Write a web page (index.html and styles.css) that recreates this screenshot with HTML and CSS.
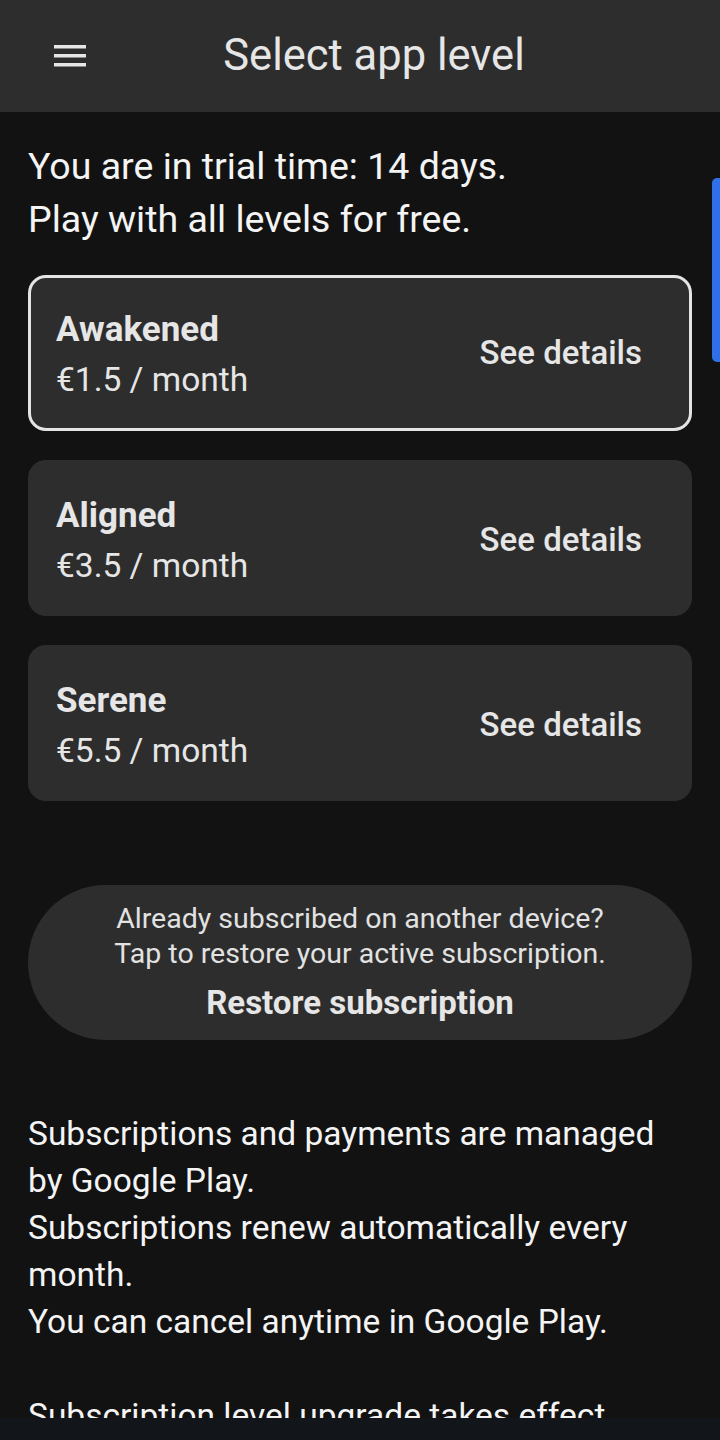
FILE: index.html
```html
<!DOCTYPE html>
<html lang="en">
<head>
<meta charset="utf-8">
<title>Select app level</title>
<link rel="stylesheet" href="styles.css">
</head>
<body>
<div class="screen">
  <header class="topbar">
    <button class="menu" aria-label="Menu">
      <svg width="32" height="22" viewBox="0 0 32 22"><rect x="0" y="0" width="32" height="3.5" fill="#e6e6e6"/><rect x="0" y="9" width="32" height="3.5" fill="#e6e6e6"/><rect x="0" y="18" width="32" height="3.5" fill="#e6e6e6"/></svg>
    </button>
    <h1 class="title">Select app level</h1>
  </header>
  <main class="content">
    <p class="trial">You are in trial time: 14 days.<br>Play with all levels for free.</p>
    <div class="plans">
      <div class="plan selected">
        <div class="plan-info"><div class="plan-name">Awakened</div><div class="plan-price">€1.5 / month</div></div>
        <div class="plan-link">See details</div>
      </div>
      <div class="plan">
        <div class="plan-info"><div class="plan-name">Aligned</div><div class="plan-price">€3.5 / month</div></div>
        <div class="plan-link">See details</div>
      </div>
      <div class="plan">
        <div class="plan-info"><div class="plan-name">Serene</div><div class="plan-price">€5.5 / month</div></div>
        <div class="plan-link">See details</div>
      </div>
    </div>
    <div class="restore">
      <div class="restore-hint">Already subscribed on another device?<br>Tap to restore your active subscription.</div>
      <div class="restore-action">Restore subscription</div>
    </div>
    <p class="info">Subscriptions and payments are managed by Google Play.<br>Subscriptions renew automatically every month.<br>You can cancel anytime in Google Play.<br><br>Subscription level upgrade takes effect immediately.</p>
  </main>
  <div class="scroll-thumb"></div>
  <div class="navbar"></div>
</div>
</body>
</html>
```
FILE: styles.css
```css
html, body {
  margin: 0;
  padding: 0;
  background: #121212;
}
.screen {
  width: 720px;
  height: 1440px;
  overflow: hidden;
  position: relative;
  background: #121212;
  font-family: Roboto, "Noto Sans", sans-serif;
  color: #ececec;
}
.topbar {
  height: 112px;
  background: #2d2d2d;
  display: flex;
  align-items: center;
}
.menu {
  background: none;
  border: 0;
  padding: 0;
  margin-left: 54px;
  display: flex;
  width: 32px;
  height: 22px;
  margin-top: -1px;
}
.title {
  margin: 0;
  flex: 1;
  text-align: center;
  font-size: 43.5px;
  font-weight: 400;
  color: #e6e6e6;
  padding-right: 58px;
  margin-top: -1px;
}
.content {
  padding: 0 28px;
}
.trial {
  margin: 28px 0 0;
  font-size: 37.5px;
  line-height: 53px;
  color: #f4f4f4;
}
.plans {
  display: flex;
  flex-direction: column;
  gap: 29px;
  margin-top: 29px;
}
.plan {
  height: 156px;
  box-sizing: border-box;
  background: #2d2d2d;
  border-radius: 18px;
  display: flex;
  align-items: center;
  justify-content: space-between;
  padding: 6px 50px 0 28px;
}
.plan.selected {
  border: 3px solid #e4e4e4;
  padding: 3px 47px 0 25px;
}
.plan-name {
  font-size: 35px;
  font-weight: 700;
  line-height: 50px;
  color: #e6e6e6;
}
.plan-price {
  font-size: 33.5px;
  line-height: 50px;
  color: #e6e6e6;
}
.plan-link {
  font-size: 33px;
  font-weight: 500;
  color: #e6e6e6;
  margin-top: -4px;
}
.restore {
  margin-top: 84px;
  height: 155px;
  box-sizing: border-box;
  background: #2d2d2d;
  border-radius: 78px;
  display: flex;
  flex-direction: column;
  align-items: center;
  text-align: center;
  padding-top: 16px;
}
.restore-hint {
  font-size: 28.5px;
  line-height: 35px;
  color: #e2e2e2;
}
.restore-action {
  margin-top: 12px;
  font-size: 33px;
  font-weight: 700;
  line-height: 40px;
  color: #e6e6e6;
}
.info {
  margin: 70px 0 0;
  font-size: 33.5px;
  line-height: 47px;
  color: #f4f4f4;
}
.scroll-thumb {
  position: absolute;
  right: 0;
  top: 178px;
  width: 8px;
  height: 184px;
  background: #2f6fea;
  border-radius: 5px 0 0 5px;
}
.navbar {
  position: absolute;
  left: 0;
  right: 0;
  bottom: 0;
  height: 22px;
  background: #12151a;
}
```
